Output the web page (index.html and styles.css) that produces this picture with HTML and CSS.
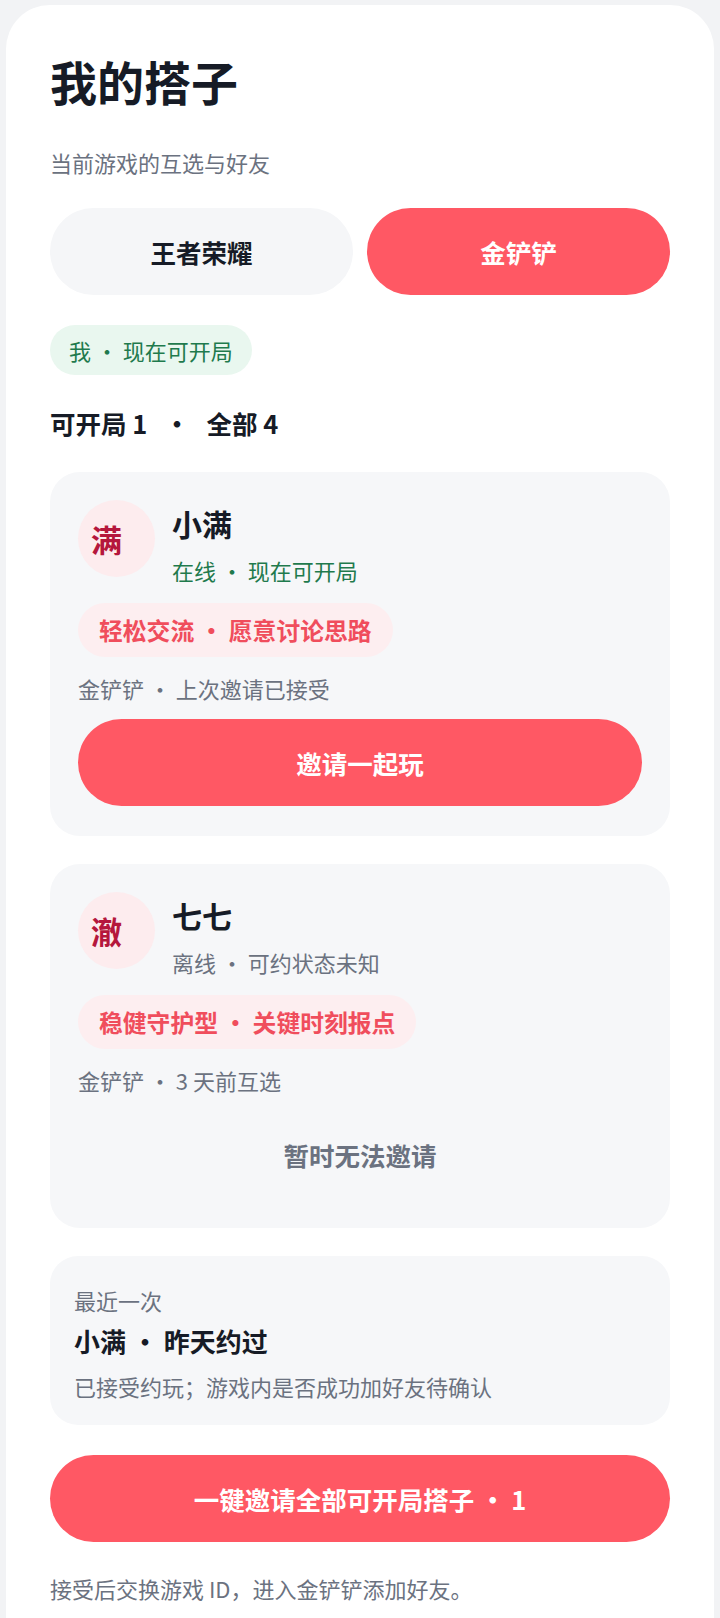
FILE: index.html
```html
<!DOCTYPE html>
<html lang="zh-CN">
<head>
<meta charset="utf-8">
<meta name="viewport" content="width=720">
<title>我的搭子</title>
<link rel="stylesheet" href="styles.css">
</head>
<body>
<main class="sheet">
  <h1 class="title">我的搭子</h1>
  <p class="subtitle">当前游戏的互选与好友</p>
  <div class="tabs">
    <button class="tab">王者荣耀</button>
    <button class="tab tab-active">金铲铲</button>
  </div>
  <div class="me-pill">我 · 现在可开局</div>
  <div class="counts">可开局 1 <span class="sep">·</span> 全部 4</div>

  <section class="card">
    <div class="card-head">
      <div class="avatar">满</div>
      <div class="info">
        <div class="name">小满</div>
        <div class="status status-online">在线 · 现在可开局</div>
      </div>
    </div>
    <div class="tag">轻松交流 · 愿意讨论思路</div>
    <div class="meta">金铲铲 · 上次邀请已接受</div>
    <button class="btn-primary">邀请一起玩</button>
  </section>

  <section class="card">
    <div class="card-head">
      <div class="avatar">澈</div>
      <div class="info">
        <div class="name">七七</div>
        <div class="status">离线 · 可约状态未知</div>
      </div>
    </div>
    <div class="tag">稳健守护型 · 关键时刻报点</div>
    <div class="meta">金铲铲 · 3 天前互选</div>
    <div class="btn-disabled">暂时无法邀请</div>
  </section>

  <section class="recent">
    <div class="recent-label">最近一次</div>
    <div class="recent-title">小满 · 昨天约过</div>
    <div class="recent-desc">已接受约玩；游戏内是否成功加好友待确认</div>
  </section>

  <button class="btn-primary btn-all">一键邀请全部可开局搭子 · 1</button>
  <p class="footnote">接受后交换游戏 ID，进入金铲铲添加好友。</p>
</main>
</body>
</html>
```
FILE: styles.css
```css
* { box-sizing: border-box; }
html, body { margin: 0; padding: 0; }
body {
  background: #f2f3f5;
  font-family: "Noto Sans CJK SC", "Noto Sans", sans-serif;
  color: #161b26;
  padding: 5px 6px 0;
}
.sheet {
  background: #ffffff;
  border-radius: 44px;
  padding: 46px 44px 60px;
  min-height: 1700px;
}
.title {
  margin: 0;
  font-size: 47px;
  line-height: 60px;
  font-weight: 700;
  color: #161b26;
}
.subtitle {
  margin: 35px 0 0;
  font-size: 22px;
  line-height: 32px;
  color: #6b7280;
}
.tabs {
  margin-top: 30px;
  display: grid;
  grid-template-columns: 1fr 1fr;
  gap: 14px;
}
.tab {
  height: 87px;
  border: none;
  border-radius: 44px;
  background: #f5f6f8;
  font-family: inherit;
  font-size: 25.5px;
  font-weight: 700;
  color: #161b26;
  padding: 0;
}
.tab-active {
  background: #ff5864;
  color: #ffffff;
}
.me-pill {
  margin-top: 30px;
  display: inline-block;
  height: 50px;
  line-height: 50px;
  padding: 0 19px;
  border-radius: 25px;
  background: #e9f7ef;
  color: #1f7a4d;
  font-size: 22px;
}
.counts {
  margin-top: 31px;
  font-size: 25.5px;
  line-height: 34px;
  font-weight: 700;
  color: #161b26;
}
.counts .sep { margin: 0 11px; }
.card {
  margin-top: 32px;
  background: #f6f7f9;
  border-radius: 30px;
  padding: 28px 28px 30px;
}
.card + .card { margin-top: 28px; }
.card-head {
  display: flex;
  align-items: flex-start;
  gap: 17px;
}
.avatar {
  flex: none;
  width: 77px;
  height: 77px;
  border-radius: 50%;
  background: #fdecee;
  color: #b5173c;
  font-size: 31px;
  font-weight: 700;
  display: flex;
  align-items: center;
  justify-content: center;
  padding-right: 20px;
}
.info { padding-top: 3px; }
.name {
  font-size: 30px;
  line-height: 40px;
  font-weight: 700;
  color: #161b26;
}
.status {
  margin-top: 11px;
  font-size: 22px;
  line-height: 32px;
  color: #6b7280;
}
.status-online { color: #1f7a4d; }
.tag {
  margin-top: 17px;
  display: inline-block;
  height: 54px;
  line-height: 54px;
  padding: 0 21px;
  border-radius: 27px;
  background: #fdeef0;
  color: #f04d5c;
  font-size: 23.8px;
  font-weight: 700;
}
.meta {
  margin-top: 15px;
  font-size: 22px;
  line-height: 32px;
  color: #6b7280;
}
.btn-primary {
  display: block;
  width: 100%;
  margin-top: 15px;
  height: 87px;
  border: none;
  border-radius: 44px;
  background: #ff5864;
  color: #ffffff;
  font-family: inherit;
  font-size: 25.5px;
  font-weight: 700;
  padding: 0;
}
.btn-disabled {
  margin-top: 15px;
  height: 87px;
  display: flex;
  align-items: center;
  justify-content: center;
  color: #6b7280;
  font-size: 25.5px;
  font-weight: 700;
}
.recent {
  margin-top: 28px;
  background: #f6f7f9;
  border-radius: 28px;
  padding: 28px 24px 23px;
}
.recent-label {
  font-size: 22px;
  line-height: 32px;
  color: #6b7280;
}
.recent-title {
  margin-top: 7px;
  font-size: 26px;
  line-height: 36px;
  font-weight: 700;
  color: #161b26;
}
.recent-desc {
  margin-top: 11px;
  font-size: 22px;
  line-height: 32px;
  color: #6b7280;
}
.btn-all { margin-top: 30px; }
.footnote {
  margin: 30px 0 0;
  font-size: 22px;
  line-height: 32px;
  color: #6b7280;
}
```
